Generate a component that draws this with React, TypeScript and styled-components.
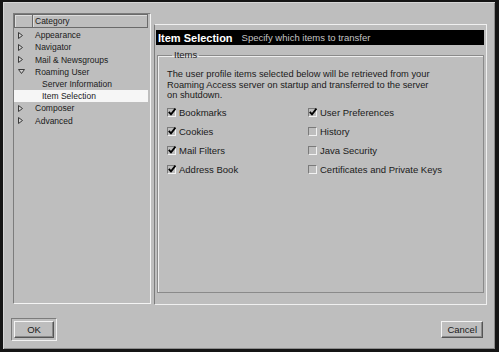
import styled, { createGlobalStyle } from 'styled-components';

const GlobalStyle = createGlobalStyle`
	html, body {
		margin: 0;
		padding: 0;
		background: #bebebe;
	}
	body {
		font-family: 'Liberation Sans', Arial, Helvetica, sans-serif;
		color: #1a1a1a;
	}
`;

type TreeItem = { label: string; level: number; arrow?: 'right' | 'down'; selected?: boolean };

const treeItems: TreeItem[] = [
	{ label: 'Appearance', level: 0, arrow: 'right' },
	{ label: 'Navigator', level: 0, arrow: 'right' },
	{ label: 'Mail & Newsgroups', level: 0, arrow: 'right' },
	{ label: 'Roaming User', level: 0, arrow: 'down' },
	{ label: 'Server Information', level: 1 },
	{ label: 'Item Selection', level: 1, selected: true },
	{ label: 'Composer', level: 0, arrow: 'right' },
	{ label: 'Advanced', level: 0, arrow: 'right' },
];

const leftItems = [
	{ label: 'Bookmarks', checked: true },
	{ label: 'Cookies', checked: true },
	{ label: 'Mail Filters', checked: true },
	{ label: 'Address Book', checked: true },
];

const rightItems = [
	{ label: 'User Preferences', checked: true },
	{ label: 'History', checked: false },
	{ label: 'Java Security', checked: false },
	{ label: 'Certificates and Private Keys', checked: false },
];

function Arrow({ dir }: { dir: 'right' | 'down' }) {
	return dir === 'right' ? (
		<svg width='6' height='7' viewBox='0 0 6 7'>
			<path d='M0.5 0.5 L4.5 3.5 L0.5 6.5 Z' fill='#cfcfcf' stroke='#3a3a3a' strokeWidth='1' />
		</svg>
	) : (
		<svg width='7' height='6' viewBox='0 0 7 6'>
			<path d='M0.5 0.5 L6.5 0.5 L3.5 4.5 Z' fill='#cfcfcf' stroke='#3a3a3a' strokeWidth='1' />
		</svg>
	);
}

function Check({ checked, label }: { checked: boolean; label: string }) {
	return (
		<CheckRow>
			<CheckBox>
				{checked && (
					<svg width='8' height='8' viewBox='0 0 8 8'>
						<path d='M0.8 3.8 L3 6.4 L7.5 0.6' fill='none' stroke='#000' strokeWidth='1.8' />
					</svg>
				)}
			</CheckBox>
			<span>{label}</span>
		</CheckRow>
	);
}

export default function App() {
	return (
		<>
			<GlobalStyle />
			<Window>
				<MainRow>
					<TreePanel>
						<TreeHeader>
							<HeaderCell width={19} />
							<HeaderCell>Category</HeaderCell>
						</TreeHeader>
						{treeItems.map((item) => (
							<TreeRow key={item.label} selected={item.selected}>
								<ArrowCell>{item.arrow && <Arrow dir={item.arrow} />}</ArrowCell>
								<TreeLabel level={item.level}>{item.label}</TreeLabel>
							</TreeRow>
						))}
					</TreePanel>
					<RightPanel>
						<TitleBar>
							<Title>Item Selection</Title>
							<Subtitle>Specify which items to transfer</Subtitle>
						</TitleBar>
						<GroupBox>
							<Legend>Items</Legend>
							<Description>
								The user profile items selected below will be retrieved from your
								<br />
								Roaming Access server on startup and transferred to the server
								<br />
								on shutdown.
							</Description>
							<CheckGrid>
								<CheckColumn>
									{leftItems.map((c) => (
										<Check key={c.label} {...c} />
									))}
								</CheckColumn>
								<CheckColumn>
									{rightItems.map((c) => (
										<Check key={c.label} {...c} />
									))}
								</CheckColumn>
							</CheckGrid>
						</GroupBox>
					</RightPanel>
				</MainRow>
				<ButtonRow>
					<DefaultRing>
						<Button width={40}>OK</Button>
					</DefaultRing>
					<Button>Cancel</Button>
				</ButtonRow>
			</Window>
		</>
	);
}

const Window = styled.div`
	width: 499px;
	height: 352px;
	box-sizing: border-box;
	background: #bebebe;
	border-style: solid;
	border-color: #151515;
	border-width: 2px 4px 3px 3px;
	box-shadow: inset 1px 1px 0 #d6d6d6, inset -1px -1px 0 #8c8c8c;
	padding: 11px 8px 0 8px;
	display: flex;
	flex-direction: column;
`;

const MainRow = styled.div`
	display: flex;
	height: 292px;
	padding-left: 2px;
	gap: 3px;
`;

const TreePanel = styled.div`
	width: 138px;
	height: 291px;
	box-sizing: border-box;
	border-style: solid;
	border-width: 1px;
	border-color: #7c7c7c #f4f4f4 #f4f4f4 #7c7c7c;
	display: flex;
	flex-direction: column;
	padding-right: 2px;
`;

const TreeHeader = styled.div`
	display: flex;
	height: 14px;
	margin-bottom: 1px;
`;

const HeaderCell = styled.div<{ width?: number }>`
	${(p) => (p.width ? `width: ${p.width}px;` : 'flex: 1;')}
	box-sizing: border-box;
	border: 1px solid #6a6a6a;
	border-left-width: ${(p) => (p.width ? '1px' : '0')};
	box-shadow: inset 1px 1px 0 #dedede;
	font-size: 8.5px;
	line-height: 12px;
	padding-left: 2px;
`;

const TreeRow = styled.div<{ selected?: boolean }>`
	display: flex;
	align-items: center;
	height: 12px;
	margin-top: 0.2px;
	background: ${(p) => (p.selected ? '#f6f6f6' : 'transparent')};
`;

const ArrowCell = styled.div`
	width: 21px;
	padding-left: 4px;
	box-sizing: border-box;
	display: flex;
	align-items: center;
`;

const TreeLabel = styled.span<{ level: number }>`
	font-size: 8.5px;
	padding-left: ${(p) => (p.level ? 7 : 0)}px;
	white-space: nowrap;
`;

const RightPanel = styled.div`
	flex: 1;
	margin-top: 11px;
	height: 281px;
	box-sizing: border-box;
	border-style: solid;
	border-width: 1px;
	border-color: #f0f0f0 #f0f0f0 #f0f0f0 #7c7c7c;
	padding: 5px 2px 11px 1px;
	display: flex;
	flex-direction: column;
`;

const TitleBar = styled.div`
	height: 15px;
	background: #000;
	display: flex;
	align-items: center;
	padding-left: 2px;
	gap: 9px;
	white-space: nowrap;
`;

const Title = styled.span`
	color: #fff;
	font-weight: 700;
	font-size: 11px;
`;

const Subtitle = styled.span`
	color: #c4c4c4;
	font-size: 9.5px;
`;

const GroupBox = styled.fieldset`
	flex: 1;
	margin: 4px 0 0 1px;
	padding: 0 8px 0 9px;
	border: 1px solid #8a8a8a;
	box-shadow: inset 1px 1px 0 #eeeeee;
	min-width: 0;
`;

const Legend = styled.legend`
	font-size: 9.5px;
	padding: 0 2px;
	margin-left: 5px;
	line-height: 12px;
`;

const Description = styled.p`
	margin: 8px 0 0 0;
	font-size: 9.3px;
	line-height: 10.5px;
	white-space: nowrap;
`;

const CheckGrid = styled.div`
	display: grid;
	grid-template-columns: 141px 1fr;
	margin-top: 6px;
`;

const CheckColumn = styled.div`
	display: flex;
	flex-direction: column;
	gap: 8px;
`;

const CheckRow = styled.div`
	display: flex;
	align-items: center;
	height: 11px;
	gap: 3px;
	font-size: 9.5px;
	white-space: nowrap;
`;

const CheckBox = styled.div`
	width: 9px;
	height: 9px;
	box-sizing: border-box;
	border-style: solid;
	border-width: 1px;
	border-color: #7a7a7a #f2f2f2 #f2f2f2 #7a7a7a;
	display: flex;
	align-items: center;
	justify-content: center;
	overflow: visible;
	svg {
		flex-shrink: 0;
	}
`;

const ButtonRow = styled.div`
	display: flex;
	justify-content: space-between;
	align-items: center;
	margin-top: 13px;
	padding-right: 4px;
`;

const DefaultRing = styled.div`
	padding: 2px;
	border-style: solid;
	border-width: 1px;
	border-color: #7c7c7c #f2f2f2 #f2f2f2 #7c7c7c;
`;

const Button = styled.button<{ width?: number }>`
	${(p) => (p.width ? `width: ${p.width}px;` : '')}
	height: 17px;
	box-sizing: border-box;
	padding: 0 5px;
	font-family: 'Liberation Sans', Arial, sans-serif;
	font-size: 9.5px;
	color: #1a1a1a;
	background: #bebebe;
	border-style: solid;
	border-width: 1px;
	border-color: #f4f4f4 #555 #555 #f4f4f4;
	box-shadow: inset -1px -1px 0 #8a8a8a;
	display: flex;
	align-items: center;
	justify-content: center;
`;
